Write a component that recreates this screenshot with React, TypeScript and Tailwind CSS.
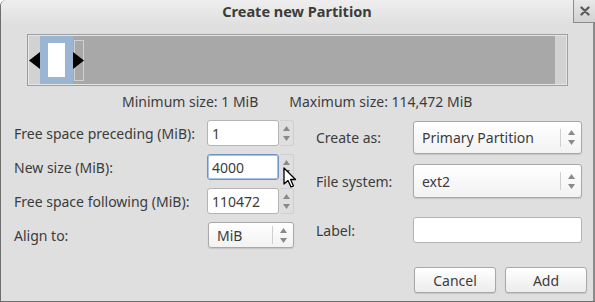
import React from "react";

const font = { fontFamily: '"Noto Sans", "Open Sans", "DejaVu Sans", sans-serif' };

function Arrows({ dark }: { dark?: boolean }) {
  return (
    <div className="flex flex-col items-center gap-[5px]">
      <svg width="7" height="5" viewBox="0 0 7 5"><path d="M3.5 0 L7 5 L0 5 Z" fill="#8a8a8a" /></svg>
      <svg width="7" height="5" viewBox="0 0 7 5"><path d="M0 0 L7 0 L3.5 5 Z" fill={dark ? "#5a5a5a" : "#8a8a8a"} /></svg>
    </div>
  );
}

function Spin({ value, focused, dark }: { value: string; focused?: boolean; dark?: boolean }) {
  return (
    <div className="flex h-[26px] items-stretch">
      <div
        className={
          "w-[72px] bg-white rounded-[3px] flex items-center pl-[4px] text-[14px] text-[#3c3c3c] " +
          (focused ? "border border-[#6b93c9] shadow-[inset_0_0_0_1px_#aac4e6]" : "border border-[#b4b4b4]")
        }
      >
        {value}
      </div>
      <div className="w-[14px] ml-[1px] rounded-r-[3px] border border-l-0 border-[#cfcfcf] flex items-center justify-center">
        <Arrows dark={dark} />
      </div>
    </div>
  );
}

function Combo({ value, w, h, sepRight }: { value: string; w: string; h: string; sepRight: string }) {
  return (
    <div
      className={
        "flex items-center rounded-[3px] border border-[#a8a8a8] bg-gradient-to-b from-[#ffffff] to-[#f2f2f2] shadow-[0_1px_1px_rgba(0,0,0,0.12)] text-[14px] text-[#3c3c3c] " +
        w + " " + h
      }
    >
      <div className="flex-1 pl-[8px]">{value}</div>
      <div className={"h-[18px] border-l border-[#cfcfcf] flex items-center justify-center " + sepRight}>
        <Arrows />
      </div>
    </div>
  );
}

function Button({ label }: { label: string }) {
  return (
    <div className="w-[82px] h-[26px] rounded-[3px] border border-[#a8a8a8] bg-gradient-to-b from-[#ffffff] to-[#ececec] shadow-[0_1px_1px_rgba(0,0,0,0.12)] flex items-center justify-center text-[14px] text-[#3c3c3c]">
      {label}
    </div>
  );
}

export default function App() {
  return (
    <div
      className="w-[595px] h-[302px] bg-[#dfdfdf] border-l border-b border-[#6e6e6e] rounded-tl-[6px] relative overflow-hidden text-[#3c3c3c]"
      style={font}
    >
      {/* title bar */}
      <div className="h-[24px] flex items-center bg-gradient-to-b from-[#eeeeee] to-[#e0e0e0]">
        <div className="flex-1 text-center text-[14.5px] font-bold text-[#3c3c3c] pl-[20px]">Create new Partition</div>
        <div className="w-[22px] h-[23px] self-start border-l border-b border-[#8c8c8c] bg-gradient-to-b from-[#e8e8e8] to-[#d2d2d2] flex items-center justify-center">
          <svg width="10" height="10" viewBox="0 0 10 10">
            <path d="M1.5 1.5 L8.5 8.5 M8.5 1.5 L1.5 8.5" stroke="#5e5e5e" strokeWidth="2.4" strokeLinecap="round" />
          </svg>
        </div>
      </div>

      {/* right window edge */}
      <div className="absolute right-0 top-[23px] bottom-0 w-[2px] bg-[#8a8a8a]" />

      {/* partition bar */}
      <div className="ml-[26px] mt-[10px] w-[541px] h-[52px] border border-[#9e9e9e] p-[1px] bg-[#e6e6e6] relative">
        <div className="flex h-full">
          <div className="w-[11px] bg-[#d2d2d2]" />
          <div className="w-[33px] bg-[#9ab6d2] flex items-center justify-center">
            <div className="w-[17px] h-[34px] bg-white" />
          </div>
          <div className="flex-1 bg-[#a8a8a8] flex items-center">
            <div className="ml-[1px] w-[10px] h-[41px] border border-[#d0d0d0]" />
          </div>
          <div className="w-[11px] bg-[#d2d2d2]" />
        </div>
        <svg className="absolute left-[1px] top-[17px]" width="11" height="17" viewBox="0 0 11 17">
          <path d="M0 8.5 L11 0 L11 17 Z" fill="#000" />
        </svg>
        <svg className="absolute left-[45px] top-[17px]" width="11" height="17" viewBox="0 0 11 17">
          <path d="M0 0 L11 8.5 L0 17 Z" fill="#000" />
        </svg>
      </div>

      {/* size labels */}
      <div className="flex mt-[6px] h-[18px] items-center text-[14px]">
        <div className="ml-[121px]">Minimum size: 1 MiB</div>
        <div className="ml-[31px]">Maximum size: 114,472 MiB</div>
      </div>

      {/* form */}
      <div className="flex mt-[10px]">
        <div className="ml-[13px] w-[280px] flex flex-col gap-[8px] text-[14px]">
          <div className="flex items-center">
            <div className="w-[194px]">Free space preceding (MiB):</div>
            <Spin value="1" />
          </div>
          <div className="flex items-center">
            <div className="w-[194px]">New size (MiB):</div>
            <Spin value="4000" focused dark />
          </div>
          <div className="flex items-center">
            <div className="w-[194px]">Free space following (MiB):</div>
            <Spin value="110472" />
          </div>
          <div className="flex items-center">
            <div className="w-[194px]">Align to:</div>
            <Combo value="MiB" w="w-[86px]" h="h-[26px]" sepRight="w-[21px]" />
          </div>
        </div>
        <div className="ml-[22px] flex flex-col text-[14px]">
          <div className="flex items-center mt-[1px] h-[33px]">
            <div className="w-[97px]">Create as:</div>
            <Combo value="Primary Partition" w="w-[169px]" h="h-[33px]" sepRight="w-[21px]" />
          </div>
          <div className="flex items-center mt-[10px] h-[34px]">
            <div className="w-[97px]">File system:</div>
            <Combo value="ext2" w="w-[169px]" h="h-[34px]" sepRight="w-[21px]" />
          </div>
          <div className="flex items-center mt-[19px] h-[26px]">
            <div className="w-[97px]">Label:</div>
            <div className="w-[169px] h-[26px] bg-white border border-[#b4b4b4] rounded-[3px]" />
          </div>
          <div className="flex mt-[24px] ml-[98px] gap-[9px]">
            <Button label="Cancel" />
            <Button label="Add" />
          </div>
        </div>
      </div>

      {/* mouse cursor */}
      <svg className="absolute left-[282px] top-[167px]" width="14" height="22" viewBox="0 0 14 22">
        <path d="M1 1 L1 17 L5 13.5 L8 20 L10.5 19 L7.6 12.5 L12.5 12.5 Z" fill="#ffffff" stroke="#000" strokeWidth="1.3" strokeLinejoin="round" />
      </svg>
    </div>
  );
}
